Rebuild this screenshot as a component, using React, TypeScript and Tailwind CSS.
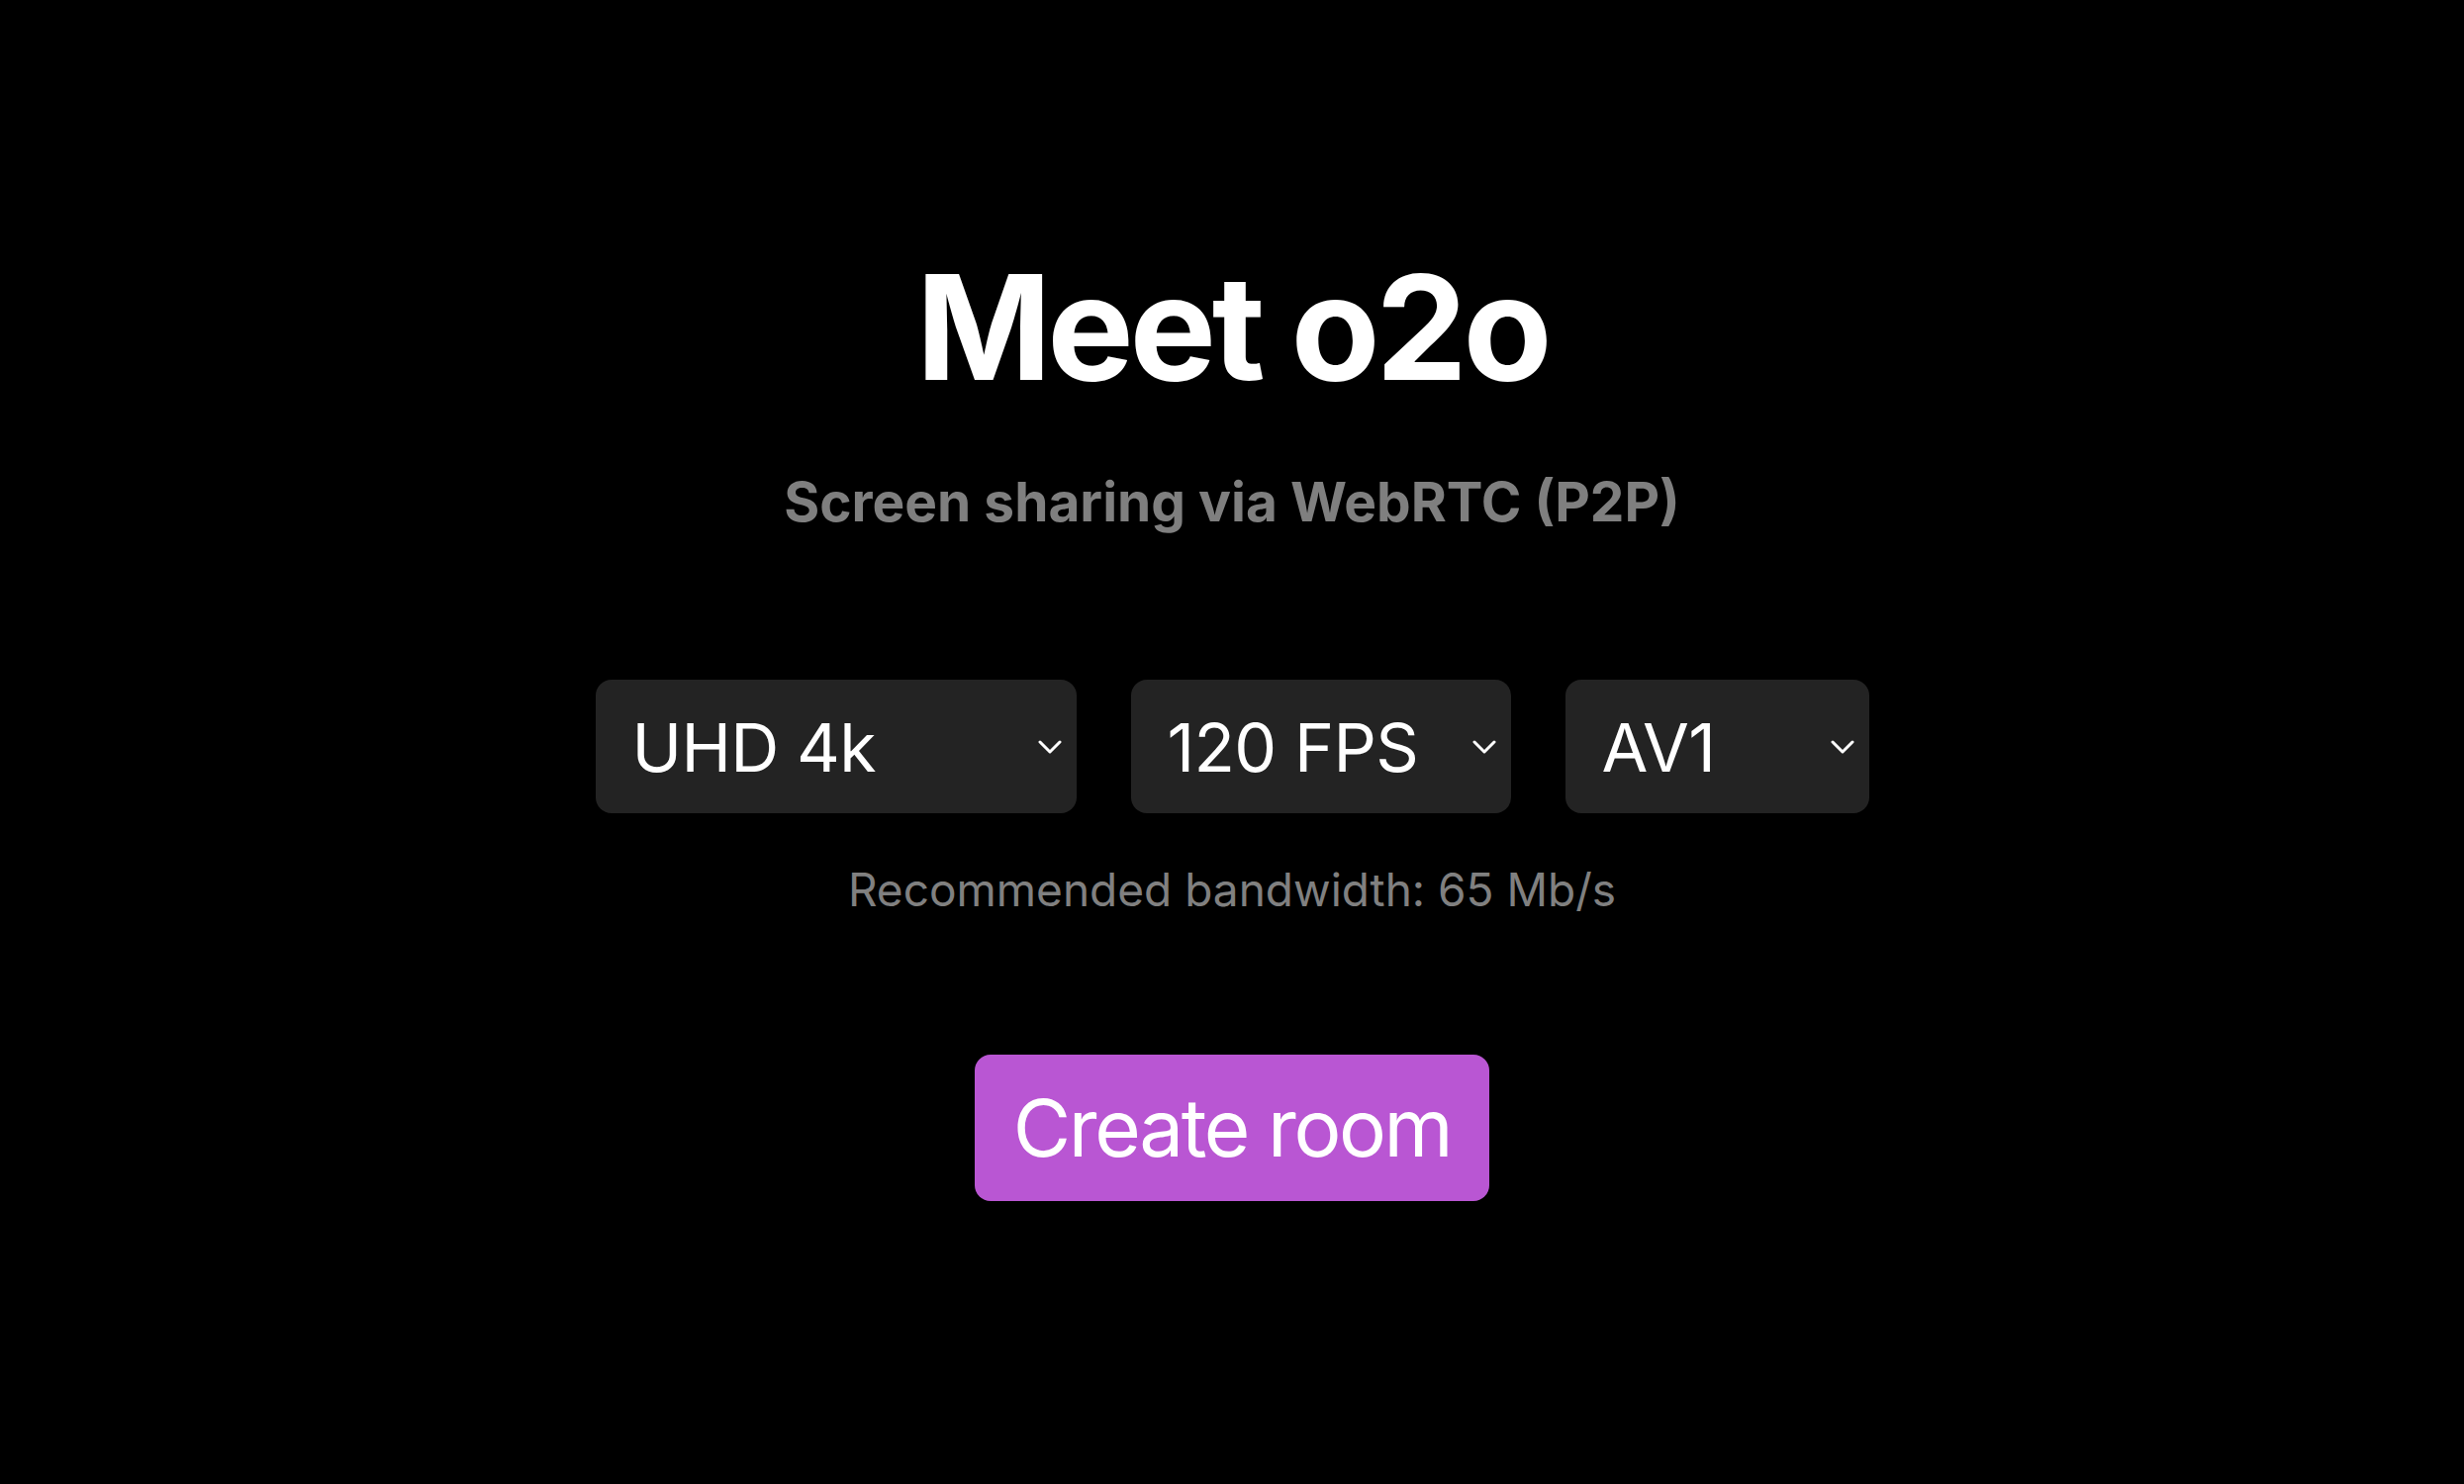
import React, { useState } from 'react';

const resolutions = ['UHD 4k', 'QHD 2k', 'FHD 1080p', 'HD 720p'];
const framerates = ['120 FPS', '60 FPS', '30 FPS'];
const codecs = ['AV1', 'VP9', 'H264'];

const Select = ({
  value,
  options,
  onChange,
  width,
}: {
  value: string;
  options: string[];
  onChange: (v: string) => void;
  width: string;
}) => (
  <div className={`relative ${width}`}>
    <select
      value={value}
      onChange={(e) => onChange(e.target.value)}
      className="w-full h-[135px] appearance-none rounded-[16px] bg-[#232323] pl-[37px] pr-[50px] text-[68px] text-white tracking-[-0.01em] outline-none"
    >
      {options.map((o) => (
        <option key={o}>{o}</option>
      ))}
    </select>
    <svg
      className="pointer-events-none absolute right-[15px] top-[60px]"
      width="24"
      height="16"
      viewBox="0 0 24 16"
      fill="none"
    >
      <path d="M2 3l10 10 10-10" stroke="white" strokeWidth="3" strokeLinecap="round" strokeLinejoin="round" />
    </svg>
  </div>
);

const App = () => {
  const [res, setRes] = useState('UHD 4k');
  const [fps, setFps] = useState('120 FPS');
  const [codec, setCodec] = useState('AV1');

  return (
    <div className="min-h-screen bg-black flex flex-col items-center pt-[257px] font-['Inter','Noto_Sans',sans-serif]">
      <h1 className="text-[147px] leading-none font-bold text-white tracking-[-0.03em]">Meet o2o</h1>
      <p className="mt-[76px] text-[55px] leading-none font-bold text-[#7f7f7f]">
        Screen sharing via WebRTC (P2P)
      </p>

      <div className="mt-[152px] flex gap-[55px]">
        <Select value={res} options={resolutions} onChange={setRes} width="w-[486px]" />
        <Select value={fps} options={framerates} onChange={setFps} width="w-[384px]" />
        <Select value={codec} options={codecs} onChange={setCodec} width="w-[307px]" />
      </div>

      <p className="mt-[54px] text-[46px] leading-none text-[#808080]">Recommended bandwidth: 65 Mb/s</p>

      <button className="mt-[144px] h-[148px] px-[39px] rounded-[16px] bg-[#b956d3] text-[80px] leading-none text-white tracking-[-0.03em]">
        Create room
      </button>
    </div>
  );
};

export default App;
